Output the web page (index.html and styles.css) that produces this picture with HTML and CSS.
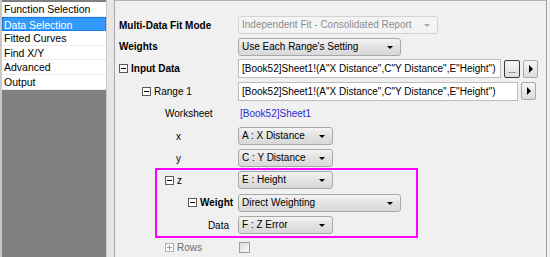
FILE: index.html
```html
<!DOCTYPE html>
<html lang="en">
<head>
  <meta charset="UTF-8">
  <title>Fit Settings</title>
  <link rel="stylesheet" href="styles.css">
</head>
<body>

<div class="ventana">
  <!-- Lista lateral -->
  <div class="lateral">
    <ul class="paginas">
      <li>Function Selection</li>
      <li class="activa"><span>Data Selection</span></li>
      <li>Fitted Curves</li>
      <li>Find X/Y</li>
      <li>Advanced</li>
      <li>Output</li>
    </ul>
  </div>

  <div class="divisor"></div>

  <!-- Panel de opciones -->
  <div class="panel">
    <div class="fila">
      <div class="etiqueta nivel0 negrita">Multi-Data Fit Mode</div>
      <div class="combo deshabilitado ancho-l">Independent Fit - Consolidated Report</div>
    </div>
    <div class="fila baja">
      <div class="etiqueta nivel0 negrita">Weights</div>
      <div class="combo ancho-m">Use Each Range's Setting</div>
    </div>
    <div class="fila alta">
      <div class="etiqueta nivel0 negrita"><span class="caja"></span>Input Data</div>
      <div class="campo ancho-input">[Book52]Sheet1!(A"X Distance",C"Y Distance",E"Height")</div>
      <div class="boton puntos">...</div>
      <div class="boton flecha"></div>
    </div>
    <div class="fila">
      <div class="etiqueta nivel1"><span class="caja"></span>Range 1</div>
      <div class="campo ancho-range">[Book52]Sheet1!(A"X Distance",C"Y Distance",E"Height")</div>
      <div class="boton flecha"></div>
    </div>
    <div class="fila alta">
      <div class="etiqueta nivel2">Worksheet</div>
      <div class="enlace">[Book52]Sheet1</div>
    </div>
    <div class="fila">
      <div class="etiqueta nivel2b">x</div>
      <div class="combo ancho-s">A : X Distance</div>
    </div>
    <div class="fila">
      <div class="etiqueta nivel2b">y</div>
      <div class="combo ancho-s">C : Y Distance</div>
    </div>
    <div class="fila">
      <div class="etiqueta nivel2"><span class="caja"></span>z</div>
      <div class="combo ancho-s">E : Height</div>
    </div>
    <div class="fila alta">
      <div class="etiqueta nivel3 negrita"><span class="caja"></span>Weight</div>
      <div class="combo ancho-m">Direct Weighting</div>
    </div>
    <div class="fila">
      <div class="etiqueta derecha">Data</div>
      <div class="combo ancho-s">F : Z Error</div>
    </div>
    <div class="fila">
      <div class="etiqueta nivel2 gris"><span class="caja mas"></span>Rows</div>
      <div class="check"></div>
    </div>

    <!-- Resaltado -->
    <div class="marca"></div>
  </div>
</div>

</body>
</html>
```

FILE: styles.css
```css
* {
  box-sizing: border-box;
}

body {
  margin: 0;
  background: #f0f0f0;
  font-family: 'Liberation Sans', Arial, sans-serif;
  font-size: 10px;
  color: #000;
}

.ventana {
  display: flex;
  height: 257px;
  overflow: hidden;
}

/* Lista lateral */
.lateral {
  width: 107px;
  background: #808080;
  border-left: 2px solid #c8c8c8;
  border-right: 1px solid #c8c8c8;
  padding-top: 2px;
}

.paginas {
  list-style: none;
  margin: 0;
  padding: 0;
  background: #fff;
  font-size: 10.5px;
}

.paginas li {
  height: 14.6px;
  line-height: 14px;
  padding-left: 2px;
  border-bottom: 1px solid #ececec;
  white-space: nowrap;
}

.paginas li.activa {
  background: #3399ff;
  color: #fff;
  border: 1px dotted #1c5fa8;
  padding-left: 1px;
}

.divisor {
  width: 8px;
  border-right: 1px solid #a8a8a8;
  background: #e6e6e6;
}

/* Panel */
.panel {
  position: relative;
  flex: 1;
  border-top: 1px solid #b4b4b4;
  border-right: 1px solid #a0a0a0;
  margin-right: 3px;
  padding-top: 13px;
}

.fila {
  display: flex;
  align-items: center;
  height: 22px;
}

.fila.alta {
  height: 23px;
}

.fila.baja {
  height: 21px;
}

.etiqueta {
  width: 123px;
  display: flex;
  align-items: center;
  white-space: nowrap;
}

.negrita {
  font-weight: bold;
}

.gris {
  color: #6d6d6d;
}

.nivel0 { padding-left: 4px; }
.nivel1 { padding-left: 27px; }
.nivel2 { padding-left: 50px; }
.nivel2b { padding-left: 61px; }
.nivel3 { padding-left: 73px; }

.derecha {
  justify-content: flex-end;
  padding-right: 9px;
}

.caja {
  position: relative;
  width: 9px;
  height: 9px;
  border: 1px solid #5a5a5a;
  background: #fff;
  margin-right: 3px;
}

.caja::before {
  content: "";
  position: absolute;
  left: 1px;
  top: 3px;
  width: 5px;
  height: 1px;
  background: #000;
}

.caja.mas {
  border-color: #b0b0b0;
}

.caja.mas::before {
  background: #9a9a9a;
}

.caja.mas::after {
  content: "";
  position: absolute;
  left: 3px;
  top: 1px;
  width: 1px;
  height: 5px;
  background: #9a9a9a;
}

/* Controles */
.combo {
  position: relative;
  height: 18px;
  line-height: 16px;
  padding-left: 3px;
  border: 1px solid #a8a8a8;
  border-radius: 3px;
  background: linear-gradient(#f4f4f4, #e2e2e2 50%, #d8d8d8);
  white-space: nowrap;
  overflow: hidden;
}

.combo::after {
  content: "";
  position: absolute;
  right: 7px;
  top: 7px;
  border-left: 3px solid transparent;
  border-right: 3px solid transparent;
  border-top: 3px solid #000;
}

.combo.deshabilitado {
  background: #f4f4f4;
  border-color: #d2d2d2;
  color: #8d8d8d;
}

.combo.deshabilitado::after {
  border-top-color: #a8a8a8;
}

.ancho-l { width: 200px; }
.ancho-m { width: 163px; }
.ancho-s { width: 95px; }

.campo {
  height: 19px;
  line-height: 17px;
  padding-left: 3px;
  background: #fff;
  border: 1px solid #bcbcbc;
  white-space: nowrap;
  overflow: hidden;
}

.ancho-input { width: 263px; }
.ancho-range { width: 280px; }

.boton {
  height: 18px;
  width: 16px;
  margin-left: 3px;
  border: 1px solid #a8a8a8;
  border-radius: 2px;
  background: linear-gradient(#f6f6f6, #dcdcdc);
  position: relative;
}

.boton.puntos {
  border: 1px solid #3a3a3a;
  line-height: 18px;
  text-align: center;
  font-size: 9px;
}

.boton.flecha {
  margin-left: 3px;
  width: 15px;
}

.boton.flecha::after {
  content: "";
  position: absolute;
  left: 5px;
  top: 4px;
  border-top: 4px solid transparent;
  border-bottom: 4px solid transparent;
  border-left: 4px solid #000;
}

.enlace {
  color: #2b2bd6;
  padding-left: 2px;
}

.check {
  width: 11px;
  height: 11px;
  margin-left: 1px;
  border: 1px solid #9c9c9c;
  background: linear-gradient(135deg, #dcdcdc, #fbfbfb);
}

/* Resaltado sobre el grupo z */
.marca {
  position: absolute;
  left: 40px;
  top: 167px;
  width: 263px;
  height: 70px;
  border: 2px solid #ff00ff;
}
```
